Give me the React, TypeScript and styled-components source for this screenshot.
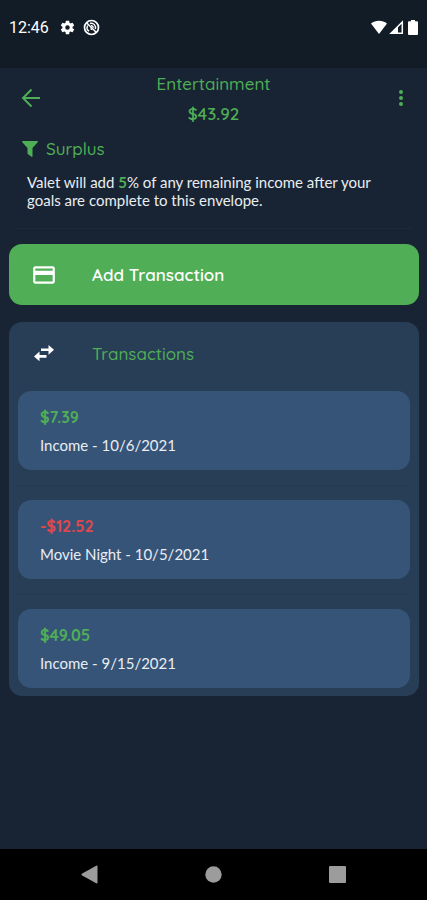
import React from "react";
import styled, { createGlobalStyle } from "styled-components";

const GlobalStyle = createGlobalStyle`
  *, *::before, *::after { box-sizing: border-box; }
  body { margin: 0; background: #182433; }
  button { font: inherit; color: inherit; background: none; border: 0; padding: 0; cursor: pointer; }
  h1, h2, p, ul { margin: 0; padding: 0; }
  svg { display: block; }
`;

const green = "#4fae56";
const red = "#e0474c";
const headingFont = `"Quicksand", "Lato", sans-serif`;

const Screen = styled.div`
  min-height: 100vh;
  display: flex;
  flex-direction: column;
  background: #182433;
  color: #e9edf2;
  font-family: "Lato", sans-serif;
  font-size: 15px;
`;

const StatusBar = styled.div`
  height: 68px;
  padding: 0 7px 14px 9px;
  display: flex;
  align-items: center;
  justify-content: space-between;
  background: #121c27;
  color: #ffffff;
`;

const StatusGroup = styled.div<{ $gap: number }>`
  display: flex;
  align-items: center;
  gap: ${(p) => p.$gap}px;
`;

const Clock = styled.span`
  font-family: "Roboto", sans-serif;
  font-size: 16px;
  line-height: 20px;
  margin-right: 3px;
  padding-top: 2px;
`;

const Header = styled.header`
  display: grid;
  grid-template-columns: 1fr auto 1fr;
  align-items: center;
  padding: 0 14px;
  color: ${green};
`;

const HeaderTitles = styled.div`
  text-align: center;
  font-family: ${headingFont};
`;

const Title = styled.h1`
  font-size: 17px;
  font-weight: 500;
  line-height: 32px;
`;

const Balance = styled.p`
  font-size: 17px;
  font-weight: 600;
  line-height: 28px;
`;

const IconButton = styled.button<{ $side: "start" | "end" }>`
  width: ${(p) => (p.$side === "start" ? 34 : 24)}px;
  height: 40px;
  display: flex;
  align-items: center;
  justify-content: center;
  justify-self: ${(p) => p.$side};
`;

const Content = styled.main`
  flex: 1;
  padding: 0 8px 16px 9px;
`;

const Surplus = styled.section`
  margin: 0 7px;
  padding: 9px 0 19px 6px;
  border-bottom: 1px solid #1d2938;
`;

const SurplusHeading = styled.h2`
  display: flex;
  align-items: center;
  gap: 8px;
  color: ${green};
  font-family: ${headingFont};
  font-size: 17px;
  font-weight: 500;
  line-height: 24px;
`;

const SurplusText = styled.p`
  max-width: 370px;
  margin-top: 12px;
  padding-left: 5px;
  line-height: 18px;
`;

const Percent = styled.span`
  color: ${green};
  font-weight: 700;
`;

const AddButton = styled.button`
  width: 100%;
  height: 61px;
  margin-top: 15px;
  padding-left: 22px;
  display: flex;
  align-items: center;
  gap: 35px;
  border-radius: 13px;
  background: ${green};
  color: #ffffff;
  font-family: ${headingFont};
  font-size: 17px;
  font-weight: 600;
`;

const Panel = styled.section`
  margin-top: 17px;
  padding: 0 9px 8px;
  border-radius: 13px;
  background: #283d56;
`;

const PanelHeading = styled.h2`
  height: 69px;
  padding: 0 0 7px 13px;
  display: flex;
  align-items: center;
  gap: 35px;
  color: ${green};
  font-family: ${headingFont};
  font-size: 17px;
  font-weight: 500;

  svg {
    color: #ffffff;
  }
`;

const List = styled.ul`
  list-style: none;
`;

const Item = styled.li`
  & + & {
    margin-top: 15px;
    padding-top: 14px;
    border-top: 1px solid #25384f;
  }
`;

const Card = styled.button`
  display: block;
  width: 100%;
  padding: 12px 22px 11px;
  border-radius: 13px;
  background: #365478;
  text-align: left;
`;

const Amount = styled.span<{ $negative: boolean }>`
  display: block;
  color: ${(p) => (p.$negative ? red : green)};
  font-family: ${headingFont};
  font-size: 16px;
  font-weight: 700;
  line-height: 28px;
`;

const Detail = styled.span`
  display: block;
  line-height: 28px;
`;

const NavBar = styled.nav`
  height: 51px;
  padding: 0 28px;
  display: grid;
  grid-template-columns: repeat(3, 1fr);
  justify-items: center;
  align-items: center;
  background: #000000;
  color: #9c9c9c;
`;

const NavButton = styled.button`
  width: 48px;
  height: 48px;
  display: flex;
  align-items: center;
  justify-content: center;
`;

type IconProps = { size?: number; path: string };

const Icon = ({ size = 24, path }: IconProps) => (
  <svg width={size} height={size} viewBox="0 0 24 24" fill="currentColor" aria-hidden="true">
    <path d={path} />
  </svg>
);

const paths = {
  gear: "M19.14 12.94c.04-.3.06-.61.06-.94s-.02-.64-.07-.94l2.03-1.58a.49.49 0 0 0 .12-.61l-1.92-3.32a.49.49 0 0 0-.59-.22l-2.39.96a7 7 0 0 0-1.62-.94l-.36-2.54a.48.48 0 0 0-.48-.41h-3.84a.48.48 0 0 0-.47.41l-.36 2.54c-.59.24-1.13.57-1.62.94l-2.39-.96a.48.48 0 0 0-.59.22L2.74 8.87a.48.48 0 0 0 .12.61l2.03 1.58c-.05.3-.09.63-.09.94s.02.64.07.94l-2.03 1.58a.49.49 0 0 0-.12.61l1.92 3.32c.12.22.37.29.59.22l2.39-.96c.5.38 1.03.7 1.62.94l.36 2.54c.05.24.24.41.48.41h3.84c.24 0 .44-.17.47-.41l.36-2.54a7 7 0 0 0 1.62-.94l2.39.96c.22.08.47 0 .59-.22l1.92-3.32a.48.48 0 0 0-.12-.61zM12 15.2a3.2 3.2 0 1 1 0-6.4 3.2 3.2 0 0 1 0 6.4z",
  more: "M12 8a2 2 0 1 0 0-4 2 2 0 0 0 0 4zm0 2a2 2 0 1 0 0 4 2 2 0 0 0 0-4zm0 6a2 2 0 1 0 0 4 2 2 0 0 0 0-4z",
  card: "M20 4H4c-1.11 0-1.99.89-1.99 2L2 18c0 1.11.89 2 2 2h16c1.11 0 2-.89 2-2V6c0-1.11-.89-2-2-2zm0 14H4v-6h16zm0-10H4V6h16z",
};

const transactions = [
  { amount: "$7.39", detail: "Income - 10/6/2021" },
  { amount: "-$12.52", detail: "Movie Night - 10/5/2021" },
  { amount: "$49.05", detail: "Income - 9/15/2021" },
];

export default function App() {
  return (
    <Screen>
      <GlobalStyle />
      <StatusBar>
        <StatusGroup $gap={7}>
          <Clock>12:46</Clock>
          <Icon size={17} path={paths.gear} />
          <svg width="17" height="17" viewBox="0 0 17 17" fill="none" stroke="currentColor" aria-hidden="true">
            <circle cx="8.500" cy="8.500" r="7" strokeWidth="1.700" />
            <path d="M6 12.200A4.300 4.300 0 0 1 4.700 6.500M7 4.500a4.300 4.300 0 0 1 5.300 5.500M7.500 9.500l1.500 1.300M8 6.800a2 2 0 0 1 2.300 2" strokeWidth="1.400" />
            <path d="M3.800 4l9.400 9.200" strokeWidth="1.500" />
          </svg>
        </StatusGroup>
        <StatusGroup $gap={2}>
          <svg width="16" height="15" viewBox="0 0 16 15" fill="currentColor" aria-hidden="true">
            <path d="M0 3.500C4.500-.3 11.500-.3 16 3.500L8 14z" />
          </svg>
          <svg width="15" height="15" viewBox="0 0 15 15" aria-hidden="true">
            <path d="M2 13.300L13.300 2v11.300z" fill="none" stroke="currentColor" strokeWidth="1.500" />
            <path d="M2 13.500L9 6.500v7z" fill="currentColor" />
          </svg>
          <svg width="14" height="15" viewBox="0 0 14 15" fill="currentColor" aria-hidden="true">
            <path d="M5 0h4v1.200h2q1 0 1 1V14q0 1-1 1H3q-1 0-1-1V2.200q0-1 1-1h2z" />
          </svg>
        </StatusGroup>
      </StatusBar>

      <Header>
        <IconButton $side="start" aria-label="Back">
          <svg width="20" height="20" viewBox="0 0 20 20" fill="none" stroke="currentColor" strokeWidth="2" aria-hidden="true">
            <path d="M19 10H2.500M10.500 1.500L2 10l8.500 8.500" />
          </svg>
        </IconButton>
        <HeaderTitles>
          <Title>Entertainment</Title>
          <Balance>$43.92</Balance>
        </HeaderTitles>
        <IconButton $side="end" aria-label="More options">
          <Icon size={26} path={paths.more} />
        </IconButton>
      </Header>

      <Content>
        <Surplus>
          <SurplusHeading>
            <svg width="16" height="16" viewBox="0 0 16 16" fill="currentColor" aria-hidden="true">
              <path d="M.5 0h15q.7.5.2 1.200L10.500 7v8.300q-.2.900-1 .5L6 13.200q-.5-.4-.5-1V7L.3 1.200Q-.2.500.5 0z" />
            </svg>
            Surplus
          </SurplusHeading>
          <SurplusText>
            Valet will add <Percent>5</Percent>% of any remaining income after your goals are complete to this envelope.
          </SurplusText>
        </Surplus>

        <AddButton>
          <Icon size={26} path={paths.card} />
          Add Transaction
        </AddButton>

        <Panel>
          <PanelHeading>
            <svg width="26" height="26" viewBox="0 0 26 26" fill="currentColor" aria-hidden="true">
              <path d="M17.500 5v3.500H10v2.600h7.500v3.600L23 9.800zM8.500 11.600L3 16.400l5.500 4.800v-3.500h7v-2.600h-7z" />
            </svg>
            Transactions
          </PanelHeading>
          <List>
            {transactions.map((t) => (
              <Item key={t.detail}>
                <Card>
                  <Amount $negative={t.amount.startsWith("-")}>{t.amount}</Amount>
                  <Detail>{t.detail}</Detail>
                </Card>
              </Item>
            ))}
          </List>
        </Panel>
      </Content>

      <NavBar aria-label="System">
        <NavButton aria-label="Back">
          <svg width="17" height="19" viewBox="0 0 17 19" fill="currentColor">
            <path d="M15.200.7q1.300-.5 1.300.7v16.200q0 1.200-1.300.7L.8 10.200q-.8-.7 0-1.400z" />
          </svg>
        </NavButton>
        <NavButton aria-label="Home">
          <svg width="17" height="17" viewBox="0 0 17 17" fill="currentColor">
            <circle cx="8.500" cy="8.500" r="8.200" />
          </svg>
        </NavButton>
        <NavButton aria-label="Recent apps">
          <svg width="17" height="17" viewBox="0 0 17 17" fill="currentColor">
            <rect width="17" height="17" rx="1" />
          </svg>
        </NavButton>
      </NavBar>
    </Screen>
  );
}
